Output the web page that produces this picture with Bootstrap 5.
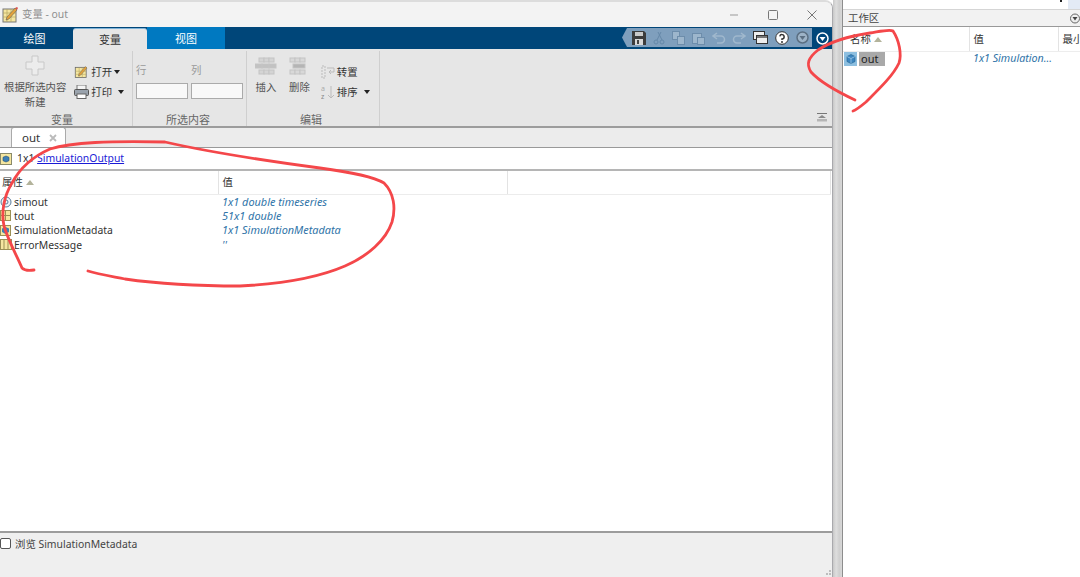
<!DOCTYPE html>
<html lang="zh-CN">
<head>
<meta charset="UTF-8">
<title>变量 - out</title>
<link href="https://cdn.jsdelivr.net/npm/bootstrap@5.3.0/dist/css/bootstrap.min.css" rel="stylesheet">
<style>
  html, body { height: 100%; }
  body { width: 1080px; height: 577px; overflow: hidden; background: #fff; font: 10.4px/1.2 "Noto Sans", "Noto Sans CJK SC", sans-serif; color: #333; position: relative; }
  .app-window { width: 833px; height: 577px; border-right: 1px solid #a9a9ad; border-top: 2px solid #dcdcdc; border-top-right-radius: 8px; background: #f0f0f0; overflow: hidden; flex: none; }
  .title-strip { height: 25px; padding-left: 1px; color: #8f8f8f; background: #f3f3f3; gap: 3px; }
  .win-btns { color: #777; gap: 29px; padding-right: 15px; }
  .tab-strip { height: 22px; background: #004679; color: #fff; font-size: 11px; }
  .rib-tab { height: 22px; width: 73px; padding-top: 2px; display: flex; align-items: center; justify-content: center; }
  .rib-tab-first { padding-right: 4px; }
  .rib-tab-on { width: 74px; background: #e6e6e6; color: #333; border-radius: 3px 3px 0 0; border-top: 1px solid #7fb3d8; margin-top: 1px; height: 21px; }
  .rib-tab-view { width: 78px; background: #0079c1; }
  .quick-bar { height: 19px; width: 190px; margin-left: auto; margin-top: 1px; background: #7f9fbd; justify-content: space-between; padding: 0 3px 0 10px; clip-path: polygon(5px 0, 100% 0, 100% 100%, 5px 100%, 0 50%); }
  .arrow-btn { width: 20px; justify-content: center; }
  .ribbon { height: 79px; background: #e6e6e6; border-bottom: 2px solid #9c9c9c; position: relative; }
  .rib-group { border-right: 1px solid #cfcfcf; height: 75px; margin-top: 2px; flex: none; }
  .rib-group-label { height: 12px; line-height: 12px; text-align: center; color: #666; font-size: 11px; }
  .rib-body { height: 63px; }
  .group-vars { width: 133px; }
  .group-vars .rib-group-label { padding-right: 8px; }
  .group-sel { width: 114px; }
  .group-sel .rib-group-label { padding-right: 3px; }
  .group-edit { width: 133px; }
  .group-edit .rib-group-label { padding-right: 4px; }
  .muted-label { color: #999; }
  .sel-input { width: 52px; height: 16px; background: #f8f8f8; border: 1px solid #aaa; }
  .sel-col { gap: 7px; margin-top: 5px; }
  .sel-cols { gap: 3px; padding: 8px 0 0 3px; }
  .big-btn { line-height: 15px; text-align: center; color: #555; }
  .big-btn-edit { margin-top: 6px; }
  .small-col { padding-top: 11px; }
  .small-col-open { padding-left: 8px; }
  .small-col-edit { margin-left: 11px; }
  .small-btn { height: 20px; gap: 2px; color: #333; white-space: nowrap; }
  .caret-down { width: 0; height: 0; border: 3.5px solid transparent; border-top: 4px solid #222; border-bottom: 0; }
  .collapse-mark { position: absolute; right: 5px; bottom: 4px; }
  .doc-tabs { height: 20px; background: #ececec; border-bottom: 1px solid #999; padding-left: 11px; }
  .doc-tab { width: 55px; height: 20px; background: #fff; border: 1px solid #aaa; border-bottom: 0; border-radius: 3px 3px 0 0; padding-left: 10px; font-size: 11.5px; gap: 9px; }
  .path-row { height: 23px; background: #fff; border-bottom: 2px solid #b5b5b5; gap: 5px; }
  .path-row a { color: #1a1ad6; }
  .prop-area { height: 362px; background: #fff; border-bottom: 2px solid #9c9c9c; }
  .prop-table { width: 831px; table-layout: fixed; margin: 0; font-size: 10.4px; }
  .prop-table th { height: 23px; padding: 0 0 0 2px; font-weight: 400; background: #fff; border-right: 1px solid #e3e3e3; border-bottom: 1px solid #ececec; border-top: 0; color: #333; vertical-align: middle; }
  .prop-table td { height: 14.5px; padding: 0 0 0 4px; border: 0; line-height: 14px; white-space: nowrap; color: #333; }
  .prop-table td.val-cell { color: #2f74a8; font-style: italic; font-size: 10.9px; }
  .name-cell { display: flex; align-items: center; gap: 1px; margin-left: -4px; }
  .sort-up { width: 0; height: 0; border: 4px solid transparent; border-bottom: 5px solid #b3b39b; border-top: 0; display: inline-block; margin-left: 3px; vertical-align: 1px; }
  .bottom-bar { padding: 5px 0 0 0; background: #efefef; height: 44px; gap: 4px; color: #444; }
  .bottom-bar .form-check-input { width: 11px; height: 11px; margin: 0; border: 1px solid #555; border-radius: 2px; }
  .splitter { width: 10px; height: 577px; flex: none; background: linear-gradient(to right, #c8c8c8, #dedede 35%, #cfcfcf 70%, #d8d8d8); border-right: 1px solid #8d8d8d; }
  .workspace { flex: 1 1 auto; min-width: 0; height: 577px; background: #fff; overflow: hidden; }
  .ws-top { height: 10px; background: #fff; border-bottom: 1px solid #d5d5d5; }
  .ws-title { height: 17px; background: #f2f2f2; padding-left: 5px; color: #444; justify-content: space-between; border-bottom: 1px solid #999; }
  .ws-table { width: 300px; table-layout: fixed; margin: 0; font-size: 10.4px; }
  .ws-table th { height: 24px; padding: 0 0 0 7px; font-weight: 400; border: 0; border-right: 1px solid #e3e3e3; border-bottom: 1px solid #ededed; white-space: nowrap; color: #333; vertical-align: middle; }
  .ws-table td { height: 16px; padding: 0; border: 0; white-space: nowrap; }
  .ws-table td.ws-val { color: #2f74a8; font-style: italic; font-size: 10.7px; padding-left: 4px; }
  .out-chip { background: #a9a9a9; color: #222; padding: 0 7px 0 2px; line-height: 14px; display: inline-block; font-size: 11px; }
  .ws-name { display: flex; align-items: center; gap: 2px; }
  .ws-icon-box { background: #8dbfe0; width: 13px; height: 14px; display: flex; align-items: center; justify-content: center; margin-left: 1px; }
  .ink-overlay { position: absolute; left: 0; top: 0; pointer-events: none; }
  .grip-dots { position: absolute; left: 824px; top: 570px; }
  .top-tool { position: absolute; right: 0; top: 0; width: 12px; height: 9px; background: #e3eaf5; }
  .top-dot { position: absolute; left: 1060px; top: 0; width: 2px; height: 2px; background: #222; }
</style>
</head>
<body>
<div class="d-flex">
  <div class="app-window">
    <div class="title-strip d-flex align-items-center">
      <svg width="18" height="18" viewBox="0 0 18 18"><rect x="2" y="3" width="13" height="13" fill="#f5e6a0" stroke="#777"/><path d="M2 7h13M2 11h13M6 3v13M10 3v13" stroke="#b5a55e" stroke-width=".7"/><path d="M5 14l1-3 8-9 2 2-8 9z" fill="#e2a23c" stroke="#555" stroke-width=".5"/><path d="M14 2l2 2 1-2-1-1z" fill="#d9534f"/></svg>
      <span>变量 - out</span>
      <div class="win-btns d-flex align-items-center ms-auto">
        <svg width="10" height="10" viewBox="0 0 10 10"><path d="M1 5h8" stroke="#999"/></svg>
        <svg width="10" height="10" viewBox="0 0 10 10"><rect x=".5" y=".5" width="9" height="9" rx="1" fill="none" stroke="#777"/></svg>
        <svg width="10" height="10" viewBox="0 0 10 10"><path d="M.5.5l9 9M9.500.5l-9 9" stroke="#777"/></svg>
      </div>
    </div>
    <div class="tab-strip d-flex">
      <div class="rib-tab rib-tab-first">绘图</div>
      <div class="rib-tab rib-tab-on">变量</div>
      <div class="rib-tab rib-tab-view">视图</div>
      <div class="quick-bar d-flex align-items-center">
        <svg width="14" height="14" viewBox="0 0 14 14"><path d="M0 0h12l2 2v12H0z" fill="#3c3c3c"/><rect x="3" y="1" width="8" height="4" fill="#c9c9c9"/><rect x="3" y="8" width="8" height="6" fill="#d8d8d8"/><rect x="5" y="9" width="2" height="4" fill="#444"/></svg>
        <svg width="12" height="14" viewBox="0 0 12 14" fill="none" stroke="#6588a8"><path d="M8 1L4 9M5 1l4 8"/><circle cx="3" cy="11" r="2"/><circle cx="9" cy="11" r="2"/></svg>
        <svg width="13" height="14" viewBox="0 0 13 14" fill="#9db6cc" stroke="#6d8dab"><rect x=".5" y=".5" width="7" height="8"/><rect x="5.500" y="5.500" width="7" height="8"/></svg>
        <svg width="13" height="14" viewBox="0 0 13 14" fill="#9db6cc" stroke="#6d8dab"><rect x=".5" y="2.500" width="9" height="10"/><rect x="5.500" y="6.500" width="7" height="7"/></svg>
        <svg width="14" height="12" viewBox="0 0 14 12" fill="none" stroke="#a0b8cd" stroke-width="1.500"><path d="M5 1L1 4l4 3M1 4h8a3 3 0 010 7H5"/></svg>
        <svg width="14" height="12" viewBox="0 0 14 12" fill="none" stroke="#a0b8cd" stroke-width="1.500"><path d="M9 1l4 3-4 3M13 4H5a3 3 0 000 7h4"/></svg>
        <svg width="15" height="13" viewBox="0 0 15 13"><rect x=".5" y=".5" width="11" height="8" fill="#eee" stroke="#333"/><rect x="3.500" y="4.500" width="11" height="8" fill="#eee" stroke="#333"/><rect x="4" y="5" width="10" height="2" fill="#777"/></svg>
        <svg width="14" height="14" viewBox="0 0 14 14"><circle cx="7" cy="7" r="6.300" fill="#fff" stroke="#333"/><path d="M4.800 5.300A2.200 2.200 0 117 8v1" fill="none" stroke="#333" stroke-width="1.500"/><circle cx="7" cy="11" r="1" fill="#333"/></svg>
        <svg width="13" height="13" viewBox="0 0 13 13"><circle cx="6.500" cy="6.500" r="5.500" fill="#9db3c7" stroke="#5b6f82" stroke-width="1.500"/><path d="M3.500 5h6l-3 4z" fill="#5b6f82"/></svg>
      </div>
      <div class="arrow-btn d-flex align-items-center">
        <svg width="13" height="13" viewBox="0 0 13 13"><circle cx="6.500" cy="6.500" r="5.500" fill="#004679" stroke="#fff" stroke-width="1.500"/><path d="M3.500 5h6l-3 4z" fill="#fff"/></svg>
      </div>
    </div>
    <div class="ribbon d-flex">
      <div class="rib-group group-vars d-flex flex-column">
        <div class="rib-body d-flex">
          <div class="big-btn d-flex flex-column align-items-center ps-1 pt-1">
            <svg width="20" height="21" viewBox="0 0 20 21"><path d="M7 1h6v6h6v7h-6v6H7v-6H1V7h6z" fill="#ececec" stroke="#c8c8c8"/></svg>
            <div class="mt-1">根据所选内容<br>新建</div>
          </div>
          <div class="small-col small-col-open d-flex flex-column">
            <div class="small-btn d-flex align-items-center">
              <svg width="15" height="14" viewBox="0 0 18 18"><rect x="1" y="3" width="14" height="13" fill="#f5e6a0" stroke="#666"/><path d="M1 8h14M1 12h14M6 3v13M10 3v13" stroke="#b5a55e" stroke-width=".7"/><path d="M5 14l1-3 8-9 2 2-8 9z" fill="#e2a23c" stroke="#555" stroke-width=".5"/></svg>
              <span>打开</span><span class="caret-down"></span>
            </div>
            <div class="small-btn d-flex align-items-center">
              <svg width="15" height="14" viewBox="0 0 15 14"><rect x="3" y="0" width="9" height="5" fill="#f4f4f4" stroke="#777"/><rect x=".5" y="4.500" width="14" height="6" rx="1" fill="#9aa3ad" stroke="#555"/><rect x="3" y="9" width="9" height="4.500" fill="#fff" stroke="#666"/></svg>
              <span>打印</span><span class="caret-down ms-1"></span>
            </div>
          </div>
        </div>
        <div class="rib-group-label">变量</div>
      </div>
      <div class="rib-group group-sel d-flex flex-column">
        <div class="rib-body sel-cols d-flex">
          <div class="sel-col d-flex flex-column">
            <span class="muted-label">行</span>
            <div class="sel-input"></div>
          </div>
          <div class="sel-col d-flex flex-column">
            <span class="muted-label">列</span>
            <div class="sel-input"></div>
          </div>
        </div>
        <div class="rib-group-label">所选内容</div>
      </div>
      <div class="rib-group group-edit d-flex flex-column">
        <div class="rib-body d-flex">
          <div class="big-btn big-btn-edit d-flex flex-column align-items-center ms-2">
            <svg width="22" height="19" viewBox="0 0 22 19" fill="#d4d4d4" stroke="#c4c4c4"><rect x="4" y="1" width="5" height="4"/><rect x="9" y="1" width="5" height="4"/><rect x="14" y="1" width="5" height="4"/><rect x="0" y="7" width="7" height="4" fill="#c2c2c2"/><rect x="7" y="7" width="7" height="4" fill="#c2c2c2"/><rect x="14" y="7" width="7" height="4" fill="#c2c2c2"/><rect x="4" y="13" width="5" height="4"/><rect x="9" y="13" width="5" height="4"/><rect x="14" y="13" width="5" height="4"/></svg>
            <div class="mt-1">插入</div>
          </div>
          <div class="big-btn big-btn-edit d-flex flex-column align-items-center ms-2 ps-1">
            <svg width="20" height="19" viewBox="0 0 20 19" fill="#d8d8d8" stroke="#c4c4c4"><rect x="1" y="1" width="5" height="4"/><rect x="6" y="1" width="5" height="4"/><rect x="11" y="1" width="5" height="4"/><rect x="4" y="7" width="12" height="4" fill="#b5b5b5"/><rect x="1" y="13" width="5" height="4"/><rect x="6" y="13" width="5" height="4"/><rect x="11" y="13" width="5" height="4"/></svg>
            <div class="mt-1">删除</div>
          </div>
          <div class="small-col small-col-edit d-flex flex-column">
            <div class="small-btn d-flex align-items-center">
              <svg width="14" height="14" viewBox="0 0 14 14" fill="none" stroke="#bbb"><rect x="1" y="1" width="3" height="12" stroke-dasharray="2 1"/><path d="M6 3h7v4H8M10 5L8 7l2 2"/></svg>
              <span>转置</span>
            </div>
            <div class="small-btn d-flex align-items-center">
              <svg width="14" height="15" viewBox="0 0 14 15" fill="none" stroke="#bbb"><path d="M10 1v12M7 10l3 3 3-3"/><text x="0" y="6" font-size="7" fill="#aaa" stroke="none">a</text><text x="0" y="14" font-size="7" fill="#888" stroke="none">z</text></svg>
              <span>排序</span><span class="caret-down ms-1"></span>
            </div>
          </div>
        </div>
        <div class="rib-group-label">编辑</div>
      </div>
      <svg class="collapse-mark" width="10" height="9" viewBox="0 0 10 9"><path d="M0 .5h10" stroke="#777"/><path d="M5 2l4 3H1z" fill="#8a8a8a"/><path d="M0 6h10v2.500H0z" fill="#b5b5b5"/></svg>
    </div>
    <div class="doc-tabs d-flex align-items-end">
      <div class="doc-tab d-flex align-items-center">
        <span>out</span>
        <svg width="8" height="8" viewBox="0 0 8 8"><path d="M1 1l6 6M7 1L1 7" stroke="#bbb" stroke-width="1.800"/></svg>
      </div>
    </div>
    <div class="path-row d-flex align-items-center">
      <svg width="12" height="12" viewBox="0 0 12 12"><rect x=".5" y=".5" width="11" height="11" fill="#f5e6a0" stroke="#8a8a6a"/><path d="M6 3l3 1.300v3.400L6 9 3 7.700V4.300z" fill="#3d7fb5" stroke="#24507a" stroke-width=".6"/></svg>
      <span>1x1 <a href="#">SimulationOutput</a></span>
    </div>
    <div class="prop-area">
      <table class="table prop-table">
        <colgroup><col style="width:218px"><col style="width:289px"><col></colgroup>
        <thead><tr><th>属性<span class="sort-up"></span></th><th class="ps-1">值</th><th></th></tr></thead>
        <tbody>
          <tr>
            <td><div class="name-cell"><svg width="13" height="13" viewBox="0 0 13 13"><circle cx="6" cy="7" r="5" fill="#eef3f8" stroke="#5c7d9c"/><circle cx="6" cy="7" r="2" fill="none" stroke="#5c7d9c"/></svg>simout</div></td>
            <td class="val-cell">1x1 double timeseries</td><td></td>
          </tr>
          <tr>
            <td><div class="name-cell"><svg width="13" height="13" viewBox="0 0 13 13"><rect x=".5" y="1.500" width="10" height="10" fill="#f5e6a0" stroke="#9a8f55"/><path d="M.5 6.500h10M5.500 1.500v10" stroke="#9a8f55"/></svg>tout</div></td>
            <td class="val-cell">51x1 double</td><td></td>
          </tr>
          <tr>
            <td><div class="name-cell"><svg width="13" height="13" viewBox="0 0 13 13"><rect x=".5" y="1.500" width="10" height="10" fill="#f5e6a0" stroke="#9a8f55"/><path d="M5.500 3l3.500 1.500v3.500L5.500 10 2 8V4.500z" fill="#3d7fb5"/></svg>SimulationMetadata</div></td>
            <td class="val-cell">1x1 SimulationMetadata</td><td></td>
          </tr>
          <tr>
            <td><div class="name-cell"><svg width="13" height="13" viewBox="0 0 13 13"><rect x=".5" y="1.500" width="11" height="10" fill="#f5e6a0" stroke="#9a8f55"/><path d="M4 1.500v10M8 1.500v10" stroke="#9a8f55"/></svg>ErrorMessage</div></td>
            <td class="val-cell">''</td><td></td>
          </tr>
        </tbody>
      </table>
    </div>
    <label class="bottom-bar d-flex align-items-start">
      <input class="form-check-input" type="checkbox">
      <span>浏览 SimulationMetadata</span>
    </label>
  </div>
  <div class="splitter"></div>
  <div class="workspace">
    <div class="ws-top"></div>
    <div class="ws-title d-flex align-items-center">
      <span>工作区</span>
      <svg width="11" height="11" viewBox="0 0 11 11"><circle cx="6" cy="5.500" r="4.500" fill="#eee" stroke="#666"/><path d="M3.500 4h5L6 7.500z" fill="#444"/></svg>
    </div>
    <table class="table ws-table">
      <colgroup><col style="width:126px"><col style="width:89px"><col></colgroup>
      <thead><tr><th>名称<span class="sort-up"></span></th><th class="ps-1">值</th><th class="ps-1">最小</th></tr></thead>
      <tbody>
        <tr>
          <td><div class="ws-name"><span class="ws-icon-box"><svg width="10" height="10" viewBox="0 0 10 10"><path d="M5 .5l4 2v5l-4 2-4-2v-5z" fill="#3d86c0" stroke="#1f5e90" stroke-width=".6"/><path d="M1 2.500l4 2 4-2M5 4.500v5" fill="none" stroke="#bcdcf2" stroke-width=".6"/></svg></span><span class="out-chip">out</span></div></td>
          <td class="ws-val">1x1 Simulation...</td><td></td>
        </tr>
      </tbody>
    </table>
  </div>
</div>
<div class="top-dot"></div>
<div class="top-tool"></div>
<svg class="grip-dots" width="8" height="7" viewBox="0 0 8 7" fill="#bdbdbd"><rect x="5" y="0" width="2" height="2"/><rect x="2" y="3" width="2" height="2"/><rect x="5" y="3" width="2" height="2"/></svg>
<!-- hand drawn red marks on top of the screenshot -->
<svg class="ink-overlay" width="1080" height="577" viewBox="0 0 1080 577" fill="none" stroke="#f4474a" stroke-width="2.800" stroke-linecap="round" stroke-linejoin="round">
  <path d="M34 270C28 271 24 270 22 268C17 256 8 240 4 226C1 212 4 196 12 183C20 168 34 156 50 149C72 142 110 141 165 142C200 150 260 160 320 168C350 172 372 176 384 183C394 193 396 208 392 222C386 240 368 256 345 266C315 279 280 284 240 286C200 286 160 284 125 279C110 276 98 274 88 271"/>
  <path d="M855 100C838 92 820 82 811 72C806 64 808 58 818 50C830 42 850 36 870 33C882 31 890 29 893 31C899 40 902 54 899 63C893 76 878 90 866 102C860 107 856 110 853 111"/>
</svg>
<script src="https://cdn.jsdelivr.net/npm/bootstrap@5.3.0/dist/js/bootstrap.bundle.min.js"></script>
</body>
</html>
